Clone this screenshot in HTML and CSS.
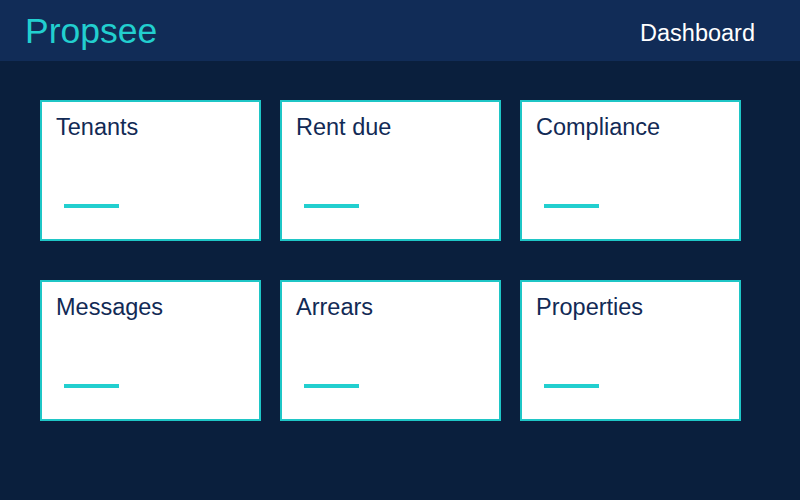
FILE: index.html
```html
<!DOCTYPE html>
<html>
<head>
<meta charset="utf-8">
<link rel="stylesheet" href="styles.css">
</head>
<body>
<header class="topbar">
  <div class="brand">Propsee</div>
  <nav class="nav">Dashboard</nav>
</header>
<main class="grid">
  <div class="card"><div class="card-title">Tenants</div><div class="card-bar"></div></div>
  <div class="card"><div class="card-title">Rent due</div><div class="card-bar"></div></div>
  <div class="card"><div class="card-title">Compliance</div><div class="card-bar"></div></div>
  <div class="card"><div class="card-title">Messages</div><div class="card-bar"></div></div>
  <div class="card"><div class="card-title">Arrears</div><div class="card-bar"></div></div>
  <div class="card"><div class="card-title">Properties</div><div class="card-bar"></div></div>
</main>
</body>
</html>
```
FILE: styles.css
```css
* { box-sizing: border-box; }
html, body {
  margin: 0;
  padding: 0;
  width: 800px;
  height: 500px;
  overflow: hidden;
  background: #0a1f3d;
  font-family: "Liberation Sans", Arial, sans-serif;
}
.topbar {
  height: 61px;
  background: #112c57;
  display: flex;
  align-items: center;
  justify-content: space-between;
  padding: 0 45px 0 25px;
}
.brand {
  color: #22cfcf;
  font-size: 35.5px;
  line-height: 40px;
}
.nav {
  color: #ffffff;
  font-size: 23.5px;
  line-height: 28px;
  margin-top: 4px;
}
.grid {
  display: grid;
  grid-template-columns: repeat(3, 221px);
  grid-auto-rows: 141px;
  column-gap: 19px;
  row-gap: 39px;
  padding: 39px 0 0 40px;
}
.card {
  background: #ffffff;
  border: 2px solid #1fc6c6;
  padding: 11px 14px 0;
  display: flex;
  flex-direction: column;
  align-items: flex-start;
}
.card-title {
  color: #122a55;
  font-size: 23.5px;
  line-height: 28px;
}
.card-bar {
  width: 55px;
  height: 4px;
  background: #22cfcf;
  margin: 63px 0 0 8px;
}
```
